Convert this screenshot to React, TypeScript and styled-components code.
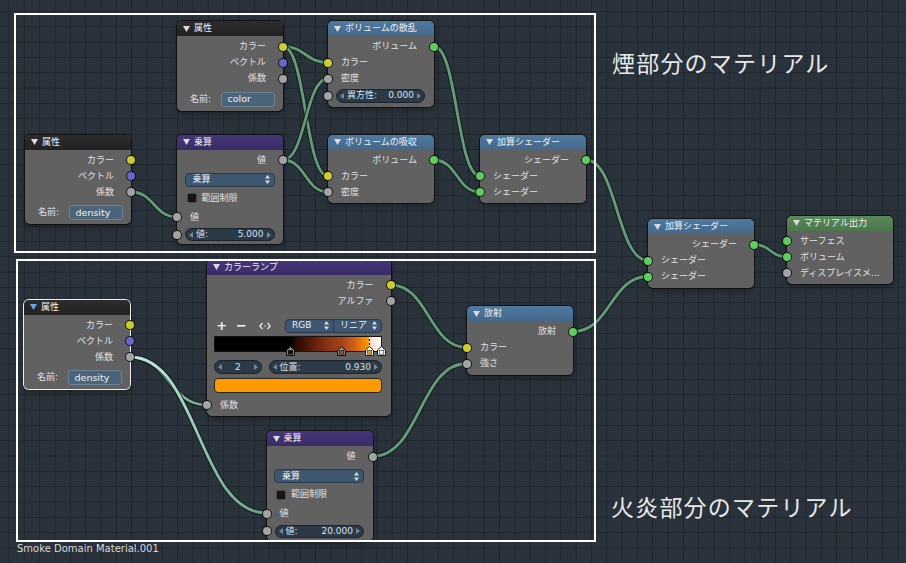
import React from 'react';
import styled, { createGlobalStyle } from 'styled-components';

const FONT = `"DejaVu Sans", "Noto Sans CJK JP", sans-serif`;

const GlobalStyle = createGlobalStyle`
  html, body { margin: 0; padding: 0; background: #2a333c; }
  #root { width: 906px; height: 563px; }
  * { box-sizing: border-box; }
`;

const YELLOW = '#cccc2e';
const VIOLET = '#6666cc';
const GREY = '#a3a3a3';
const GREEN = '#60cc60';

const Canvas = styled.div`
  position: relative;
  width: 906px;
  height: 563px;
  overflow: hidden;
  background-color: #2a333c;
  background-image:
    linear-gradient(to right, #1f262c 1px, transparent 1px),
    linear-gradient(to bottom, #1f262c 1px, transparent 1px);
  background-size: 15.33px 15.33px;
  background-position: 8.5px 11px;
  font-family: ${FONT};
  color: #e0e0e0;
`;

const WireLayer = styled.svg`
  position: absolute;
  left: 0;
  top: 0;
  width: 906px;
  height: 563px;
  pointer-events: none;
`;

const NodeBox = styled.div<{ $x: number; $y: number; $w: number; $selected?: boolean }>`
  position: absolute;
  left: ${p => p.$x}px;
  top: ${p => p.$y}px;
  width: ${p => p.$w}px;
  border-radius: 5px;
  background: rgba(100, 100, 100, 0.95);
  box-shadow: 0 0 0 1px ${p => (p.$selected ? '#eeeeee' : 'rgba(12,12,12,0.8)')}, 0 3px 6px rgba(0, 0, 0, 0.3);
  font-size: 9px;
  line-height: 1;
`;

type Kind = 'input' | 'shader' | 'converter' | 'output';
const headerBg: Record<Kind, string> = {
  input: 'linear-gradient(#2d2d2d, #222222)',
  shader: 'linear-gradient(#50799f, #44688c)',
  converter: 'linear-gradient(#45367a, #3a2c66)',
  output: 'linear-gradient(#5a885a, #4b784b)',
};

const NodeHeader = styled.div<{ $kind: Kind }>`
  height: 15px;
  display: flex;
  align-items: center;
  gap: 4px;
  padding-left: 6px;
  border-radius: 5px 5px 0 0;
  background: ${p => headerBg[p.$kind]};
  color: #f0f0f0;
  font-size: 9px;
  white-space: nowrap;
  overflow: hidden;
`;

const CaretSvg = styled.svg`
  flex: 0 0 auto;
  width: 7px;
  height: 6px;
`;

const Caret = ({ color = '#dcdcdc' }: { color?: string }) => (
  <CaretSvg viewBox="0 0 7 6">
    <polygon points="0,0 7,0 3.5,6" fill={color} />
  </CaretSvg>
);

const NodeBody = styled.div<{ $pb: number }>`
  display: flex;
  flex-direction: column;
  padding: 2.5px 0 ${p => p.$pb}px;
`;

const SockRow = styled.div<{ $out?: boolean; $mt?: number }>`
  position: relative;
  height: 16px;
  display: flex;
  align-items: center;
  justify-content: ${p => (p.$out ? 'flex-end' : 'flex-start')};
  padding: ${p => (p.$out ? '0 17px 0 0' : '0 0 0 13px')};
  margin-top: ${p => p.$mt ?? 0}px;
  white-space: nowrap;
  color: #e2e2e2;
`;

const Socket = styled.span<{ $out?: boolean; $c: string }>`
  position: absolute;
  top: 50%;
  ${p => (p.$out ? 'right' : 'left')}: -4px;
  width: 8px;
  height: 8px;
  margin-top: -4px;
  border-radius: 50%;
  background: ${p => p.$c};
  box-shadow: 0 0 0 1px rgba(0, 0, 0, 0.8);
`;

const WidgetRow = styled.div<{ $mt: number; $h: number; $pl?: number; $pr?: number; $between?: boolean }>`
  position: relative;
  display: flex;
  align-items: center;
  justify-content: ${p => (p.$between ? 'space-between' : 'flex-start')};
  height: ${p => p.$h}px;
  margin-top: ${p => p.$mt}px;
  padding: 0 ${p => p.$pr ?? 8.5}px 0 ${p => p.$pl ?? 8}px;
  white-space: nowrap;
`;

const TextField = styled.div`
  width: 54px;
  height: 15px;
  display: flex;
  align-items: center;
  padding-left: 6px;
  border-radius: 3px;
  background: #4b6479;
  border: 1px solid #6c8397;
  color: #f2f2f2;
  font-size: 9.5px;
`;

const NumField = styled.div`
  flex: 1;
  height: 100%;
  display: flex;
  align-items: center;
  gap: 3px;
  padding: 0 3px;
  border-radius: 7px;
  background: #2c3a47;
  border: 1px solid #1b242c;
  color: #d6e1ec;
  font-size: 9px;
`;

const Grow = styled.span`
  flex: 1;
`;

const ArrowSvg = styled.svg`
  flex: 0 0 auto;
  width: 4px;
  height: 6px;
`;

const Arrow = ({ right }: { right?: boolean }) => (
  <ArrowSvg viewBox="0 0 4 6">
    <polygon points={right ? '0,0 4,3 0,6' : '4,0 0,3 4,6'} fill="#7a8896" />
  </ArrowSvg>
);

const Dropdown = styled.div`
  flex: 1;
  height: 100%;
  display: flex;
  align-items: center;
  padding: 0 4px 0 7px;
  border-radius: 4px;
  background: #3d5771;
  border: 1px solid #2a3b4d;
  color: #f0f0f0;
  font-size: 9px;
`;

const UpDownSvg = styled.svg`
  flex: 0 0 auto;
  width: 5px;
  height: 9px;
`;

const UpDown = () => (
  <UpDownSvg viewBox="0 0 5 9">
    <polygon points="0,3.5 2.5,0 5,3.5" fill="#d8dde4" />
    <polygon points="0,5.5 2.5,9 5,5.5" fill="#d8dde4" />
  </UpDownSvg>
);

const CheckBox = styled.span`
  width: 10px;
  height: 10px;
  margin-right: 5px;
  border-radius: 2px;
  background: #161616;
  border: 1px solid #4a4a4a;
`;

/* ---------- color ramp parts ---------- */

const RampTools = styled.div`
  display: flex;
  align-items: center;
  height: 14px;
  margin-top: 9.5px;
  padding: 0 9px 0 6.5px;
`;

const ToolBtn = styled.span<{ $w: number }>`
  width: ${p => p.$w}px;
  height: 100%;
  display: flex;
  align-items: center;
  justify-content: center;
  color: #f4f4f4;
  font-size: 13px;
  font-weight: bold;
  font-family: "DejaVu Sans", sans-serif;
`;

const Combo = styled.div`
  flex: 1;
  height: 100%;
  margin-left: 8px;
  display: flex;
  border-radius: 4px;
  background: #3d5771;
  border: 1px solid #2a3b4d;
  overflow: hidden;
`;

const ComboPart = styled.div<{ $w?: number }>`
  ${p => (p.$w ? `width: ${p.$w}px;` : 'flex: 1;')}
  display: flex;
  align-items: center;
  padding: 0 4px 0 6px;
  color: #f0f0f0;
  font-size: 9px;
  & + & {
    border-left: 1px solid #2a3b4d;
  }
`;

const RampWrap = styled.div`
  height: 16px;
  margin-top: 3.5px;
  padding: 0 8.5px 0 6.5px;
`;

const RampBar = styled.div`
  position: relative;
  height: 100%;
  border: 1px solid #141414;
  background: linear-gradient(
    to right,
    #000 0%,
    #000 45.5%,
    #2a0a03 49%,
    #5a1c0a 58%,
    #8a3314 68%,
    #a8421d 76.5%,
    #d0601a 84%,
    #f08a08 90%,
    #ff9a00 92.6%,
    #ffd8c8 93.4%,
    #ffeee6 97%,
    #ffffff 100%
  );
`;

const ActiveLine = styled.span<{ $pos: number }>`
  position: absolute;
  top: 0;
  bottom: 0;
  left: ${p => p.$pos}%;
  width: 1px;
  background: repeating-linear-gradient(to bottom, #ffffff 0 2px, #000 2px 4px);
`;

const StopSvg = styled.svg<{ $pos: number }>`
  position: absolute;
  left: calc(${p => p.$pos}% - 4.5px);
  top: 8.5px;
  width: 9px;
  height: 10px;
`;

const Stop = ({ pos, fill, active, light }: { pos: number; fill: string; active?: boolean; light?: boolean }) => (
  <StopSvg $pos={pos} viewBox="0 0 9 10">
    <polygon
      points="0.5,4 4.5,0.5 8.5,4 8.5,9.5 0.5,9.5"
      fill={light ? '#f4f4f4' : active ? '#ffffff' : '#8a8a8a'}
      stroke={active || light ? '#1a1a1a' : '#0c0c0c'}
      strokeWidth="1"
    />
    <rect x="2.2" y="4.5" width="4.6" height="3.6" fill={fill} stroke="#000" strokeWidth="0.5" />
  </StopSvg>
);

const RampNumRow = styled.div`
  display: flex;
  gap: 6.5px;
  height: 14px;
  margin-top: 8px;
  padding: 0 8.5px 0 6.5px;
`;

const CountField = styled(NumField)`
  flex: 0 0 48.5px;
`;

const SwatchWrap = styled.div`
  height: 14.5px;
  margin-top: 4px;
  padding: 0 8.5px 0 6.5px;
`;

const Swatch = styled.div`
  height: 100%;
  border-radius: 4px;
  background: #ff9a00;
  border: 1px solid #262626;
`;

/* ---------- overlays ---------- */

const Frame = styled.div<{ $x: number; $y: number; $w: number; $h: number }>`
  position: absolute;
  left: ${p => p.$x}px;
  top: ${p => p.$y}px;
  width: ${p => p.$w}px;
  height: ${p => p.$h}px;
  border: 2px solid #ffffff;
  pointer-events: none;
`;

const FrameLabel = styled.div<{ $x: number; $y: number }>`
  position: absolute;
  left: ${p => p.$x}px;
  top: ${p => p.$y}px;
  font-family: "Noto Sans CJK JP", sans-serif;
  font-size: 23px;
  letter-spacing: 1.2px;
  line-height: 1;
  color: #e8e8e8;
  white-space: nowrap;
`;

const Caption = styled.div`
  position: absolute;
  left: 17px;
  top: 542.5px;
  font-family: "DejaVu Sans", sans-serif;
  font-size: 10px;
  line-height: 1.2;
  color: #dadada;
`;

/* ---------- wires ---------- */

type Wire = { x1: number; y1: number; x2: number; y2: number; hi?: boolean };

const wires: Wire[] = [
  { x1: 283, y1: 46.5, x2: 328, y2: 62.5 },
  { x1: 283, y1: 46.5, x2: 328, y2: 176 },
  { x1: 283, y1: 160, x2: 328, y2: 78.5 },
  { x1: 283, y1: 160, x2: 328, y2: 192 },
  { x1: 131, y1: 192, x2: 177, y2: 217 },
  { x1: 434, y1: 46.5, x2: 480, y2: 176 },
  { x1: 434, y1: 160, x2: 480, y2: 192 },
  { x1: 586, y1: 160, x2: 648, y2: 260.5 },
  { x1: 573, y1: 331.5, x2: 648, y2: 276.5 },
  { x1: 754, y1: 244.5, x2: 787, y2: 257 },
  { x1: 130, y1: 357, x2: 207, y2: 405, hi: true },
  { x1: 130, y1: 357, x2: 266.5, y2: 513, hi: true },
  { x1: 390.5, y1: 285, x2: 467, y2: 347.5 },
  { x1: 372.5, y1: 456.5, x2: 467, y2: 363.5 },
];

const wirePath = (w: Wire) => {
  const d = Math.max(Math.abs(w.x2 - w.x1) * 0.5, 8);
  return `M${w.x1} ${w.y1} C${w.x1 + d} ${w.y1} ${w.x2 - d} ${w.y2} ${w.x2} ${w.y2}`;
};

const Wires = () => (
  <WireLayer viewBox="0 0 906 563">
    <defs>
      {wires.map((w, i) =>
        w.hi ? (
          <linearGradient key={i} id={`hg${i}`} gradientUnits="userSpaceOnUse" x1={w.x1} y1={w.y1} x2={w.x2} y2={w.y2}>
            <stop offset="0" stopColor="#bfe9e2" />
            <stop offset="1" stopColor="#6aa686" />
          </linearGradient>
        ) : null
      )}
    </defs>
    {wires.map((w, i) => (
      <g key={i}>
        <path d={wirePath(w)} fill="none" stroke="#151c19" strokeOpacity="0.8" strokeWidth="5" />
        <path d={wirePath(w)} fill="none" stroke={w.hi ? `url(#hg${i})` : '#639d77'} strokeWidth="2.8" />
      </g>
    ))}
  </WireLayer>
);

/* ---------- node components ---------- */

const AttributeNode = ({ x, y, name, selected }: { x: number; y: number; name: string; selected?: boolean }) => (
  <NodeBox $x={x} $y={y} $w={106} $selected={selected}>
    <NodeHeader $kind="input">
      <Caret color={selected ? '#6aa6de' : '#dcdcdc'} />
      属性
    </NodeHeader>
    <NodeBody $pb={4}>
      <SockRow $out>
        カラー
        <Socket $out $c={YELLOW} />
      </SockRow>
      <SockRow $out>
        ベクトル
        <Socket $out $c={VIOLET} />
      </SockRow>
      <SockRow $out>
        係数
        <Socket $out $c={GREY} />
      </SockRow>
      <WidgetRow $mt={5} $h={15} $pl={13} $pr={8.5} $between>
        <span>名前:</span>
        <TextField>{name}</TextField>
      </WidgetRow>
    </NodeBody>
  </NodeBox>
);

const MathNode = ({ x, y, value }: { x: number; y: number; value: string }) => (
  <NodeBox $x={x} $y={y} $w={106}>
    <NodeHeader $kind="converter">
      <Caret />
      乗算
    </NodeHeader>
    <NodeBody $pb={3}>
      <SockRow $out>
        値
        <Socket $out $c={GREY} />
      </SockRow>
      <WidgetRow $mt={4.5} $h={14} $pl={7.5} $pr={8.5}>
        <Dropdown>
          乗算
          <Grow />
          <UpDown />
        </Dropdown>
      </WidgetRow>
      <WidgetRow $mt={3.5} $h={16} $pl={9.5}>
        <CheckBox />
        範囲制限
      </WidgetRow>
      <SockRow $mt={3}>
        値
        <Socket $c={GREY} />
      </SockRow>
      <WidgetRow $mt={3} $h={13} $pl={8} $pr={8.5}>
        <Socket $c={GREY} />
        <NumField>
          <Arrow />
          値:
          <Grow />
          {value}
          <Arrow right />
        </NumField>
      </WidgetRow>
    </NodeBody>
  </NodeBox>
);

type SockDef = { label: string; c: string };

const SimpleNode = ({
  x,
  y,
  kind,
  title,
  outs,
  ins,
}: {
  x: number;
  y: number;
  kind: Kind;
  title: string;
  outs: SockDef[];
  ins: SockDef[];
}) => (
  <NodeBox $x={x} $y={y} $w={106}>
    <NodeHeader $kind={kind}>
      <Caret />
      {title}
    </NodeHeader>
    <NodeBody $pb={3}>
      {outs.map(s => (
        <SockRow $out key={'o' + s.label}>
          {s.label}
          <Socket $out $c={s.c} />
        </SockRow>
      ))}
      {ins.map((s, i) => (
        <SockRow key={'i' + i}>
          {s.label}
          <Socket $c={s.c} />
        </SockRow>
      ))}
    </NodeBody>
  </NodeBox>
);

const ScatterNode = () => (
  <NodeBox $x={328} $y={21} $w={106}>
    <NodeHeader $kind="shader">
      <Caret />
      ボリュームの散乱
    </NodeHeader>
    <NodeBody $pb={4}>
      <SockRow $out>
        ボリューム
        <Socket $out $c={GREEN} />
      </SockRow>
      <SockRow>
        カラー
        <Socket $c={YELLOW} />
      </SockRow>
      <SockRow>
        密度
        <Socket $c={GREY} />
      </SockRow>
      <WidgetRow $mt={2.5} $h={13.5} $pl={8} $pr={9}>
        <Socket $c={GREY} />
        <NumField>
          <Arrow />
          異方性:
          <Grow />
          0.000
          <Arrow right />
        </NumField>
      </WidgetRow>
    </NodeBody>
  </NodeBox>
);

const ArrowsIcon = () => (
  <svg width="12" height="8" viewBox="0 0 12 8">
    <polyline points="3.5,1 0.8,4 3.5,7" fill="none" stroke="#eeeeee" strokeWidth="1.2" />
    <polyline points="8.5,1 11.2,4 8.5,7" fill="none" stroke="#eeeeee" strokeWidth="1.2" />
    <rect x="5.4" y="3.4" width="1.2" height="1.2" fill="#eeeeee" />
  </svg>
);

const ColorRampNode = () => (
  <NodeBox $x={207} $y={259.5} $w={183.5}>
    <NodeHeader $kind="converter">
      <Caret />
      カラーランプ
    </NodeHeader>
    <NodeBody $pb={3}>
      <SockRow $out>
        カラー
        <Socket $out $c={YELLOW} />
      </SockRow>
      <SockRow $out>
        アルファ
        <Socket $out $c={GREY} />
      </SockRow>
      <RampTools>
        <ToolBtn $w={16.5}>+</ToolBtn>
        <ToolBtn $w={23}>−</ToolBtn>
        <ToolBtn $w={24}>
          <ArrowsIcon />
        </ToolBtn>
        <Combo>
          <ComboPart $w={47}>
            RGB
            <Grow />
            <UpDown />
          </ComboPart>
          <ComboPart>
            リニア
            <Grow />
            <UpDown />
          </ComboPart>
        </Combo>
      </RampTools>
      <RampWrap>
        <RampBar>
          <ActiveLine $pos={93} />
          <Stop pos={45.5} fill="#0a0a0a" />
          <Stop pos={76.5} fill="#b0482a" />
          <Stop pos={93} fill="#ff9a00" active />
          <Stop pos={100} fill="#ffffff" light />
        </RampBar>
      </RampWrap>
      <RampNumRow>
        <CountField>
          <Arrow />
          <Grow />
          2
          <Grow />
          <Arrow right />
        </CountField>
        <NumField>
          <Arrow />
          位置:
          <Grow />
          0.930
          <Arrow right />
        </NumField>
      </RampNumRow>
      <SwatchWrap>
        <Swatch />
      </SwatchWrap>
      <SockRow $mt={4.5}>
        係数
        <Socket $c={GREY} />
      </SockRow>
    </NodeBody>
  </NodeBox>
);

export default function App() {
  return (
    <>
      <GlobalStyle />
      <Canvas>
        <Wires />

        <AttributeNode x={177} y={21} name="color" />
        <ScatterNode />
        <AttributeNode x={25} y={134.5} name="density" />
        <MathNode x={177} y={134.5} value="5.000" />
        <SimpleNode
          x={328}
          y={134.5}
          kind="shader"
          title="ボリュームの吸収"
          outs={[{ label: 'ボリューム', c: GREEN }]}
          ins={[
            { label: 'カラー', c: YELLOW },
            { label: '密度', c: GREY },
          ]}
        />
        <SimpleNode
          x={480}
          y={134.5}
          kind="shader"
          title="加算シェーダー"
          outs={[{ label: 'シェーダー', c: GREEN }]}
          ins={[
            { label: 'シェーダー', c: GREEN },
            { label: 'シェーダー', c: GREEN },
          ]}
        />
        <SimpleNode
          x={648}
          y={219}
          kind="shader"
          title="加算シェーダー"
          outs={[{ label: 'シェーダー', c: GREEN }]}
          ins={[
            { label: 'シェーダー', c: GREEN },
            { label: 'シェーダー', c: GREEN },
          ]}
        />
        <SimpleNode
          x={787}
          y={215.5}
          kind="output"
          title="マテリアル出力"
          outs={[]}
          ins={[
            { label: 'サーフェス', c: GREEN },
            { label: 'ボリューム', c: GREEN },
            { label: 'ディスプレイスメ...', c: GREY },
          ]}
        />
        <ColorRampNode />
        <AttributeNode x={24} y={299.5} name="density" selected />
        <SimpleNode
          x={467}
          y={306}
          kind="shader"
          title="放射"
          outs={[{ label: '放射', c: GREEN }]}
          ins={[
            { label: 'カラー', c: YELLOW },
            { label: '強さ', c: GREY },
          ]}
        />
        <MathNode x={266.5} y={431} value="20.000" />

        <Frame $x={14} $y={13} $w={582} $h={240} />
        <Frame $x={16} $y={259} $w={580} $h={283} />
        <FrameLabel $x={612} $y={51}>煙部分のマテリアル</FrameLabel>
        <FrameLabel $x={611} $y={495}>火炎部分のマテリアル</FrameLabel>
        <Caption>Smoke Domain Material.001</Caption>
      </Canvas>
    </>
  );
}
